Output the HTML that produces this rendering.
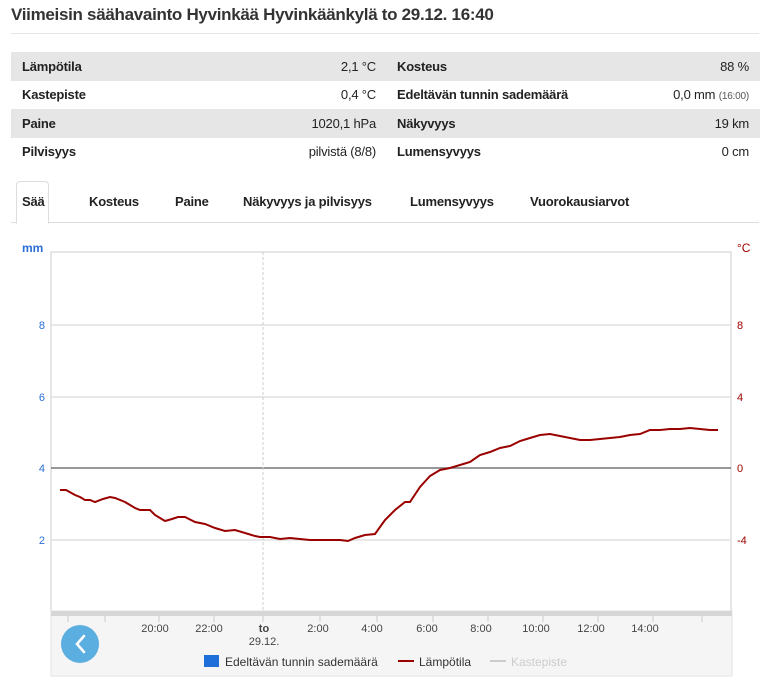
<!DOCTYPE html>
<html><head><meta charset="utf-8"><style>
body{margin:0;width:767px;height:685px;background:#fff;font-family:"Liberation Sans",sans-serif;color:#222;position:relative;overflow:hidden}
.a{position:absolute}
h1{position:absolute;left:11px;top:5px;margin:0;font-size:17px;font-weight:bold;color:#333;letter-spacing:-0.3px}
.hr{position:absolute;left:11px;top:33px;width:748px;height:1px;background:#e5e5e5}
table{position:absolute;left:11px;top:52px;width:749px;border-collapse:collapse;font-size:13px;table-layout:fixed}
td{height:28.5px;padding:0 11px 0 11px;letter-spacing:-0.2px;white-space:nowrap}
td.l2{padding-left:10px}
tr.g td{background:#e6e6e6}
td.l{font-weight:bold}
td.v{text-align:right}
small{font-size:10px;color:#555}
.tabs{position:absolute;left:11px;top:222px;width:748px;height:1px;background:#ddd}
.tab{position:absolute;top:194px;font-size:13px;font-weight:bold;color:#222;letter-spacing:-0.2px}
.act{position:absolute;left:16px;top:181px;width:31px;height:41px;border:1px solid #ddd;border-bottom:1px solid #fff;border-radius:4px 4px 0 0;background:#fff}
</style></head><body>
<h1>Viimeisin säähavainto Hyvinkää Hyvinkäänkylä to 29.12. 16:40</h1>
<div class="hr"></div>
<table>
<colgroup><col style="width:200px"><col style="width:176px"><col style="width:200px"><col style="width:173px"></colgroup>
<tr class="g"><td class="l">Lämpötila</td><td class="v">2,1 °C</td><td class="l l2">Kosteus</td><td class="v">88 %</td></tr>
<tr><td class="l">Kastepiste</td><td class="v">0,4 °C</td><td class="l l2">Edeltävän tunnin sademäärä</td><td class="v">0,0 mm <small>(16:00)</small></td></tr>
<tr class="g"><td class="l">Paine</td><td class="v">1020,1 hPa</td><td class="l l2">Näkyvyys</td><td class="v">19 km</td></tr>
<tr><td class="l">Pilvisyys</td><td class="v">pilvistä (8/8)</td><td class="l l2">Lumensyvyys</td><td class="v">0 cm</td></tr>
</table>
<div class="tabs"></div>
<div class="act"></div>
<div class="tab" style="left:22px">Sää</div>
<div class="tab" style="left:89px">Kosteus</div>
<div class="tab" style="left:175px">Paine</div>
<div class="tab" style="left:243px">Näkyvyys ja pilvisyys</div>
<div class="tab" style="left:410px">Lumensyvyys</div>
<div class="tab" style="left:530px">Vuorokausiarvot</div>
<svg class="a" style="left:0;top:0" width="767" height="685" font-family="Liberation Sans, sans-serif" font-size="11">
<text x="22" y="252" fill="#2a6fd6" font-weight="bold" font-size="12">mm</text>
<text x="737" y="252" fill="#a00000" font-size="12">°C</text>
<rect x="51" y="252" width="680" height="359" fill="none" stroke="#ccc"/>
<g stroke="#e0e0e0" stroke-width="1.5"><line x1="51" x2="731" y1="325" y2="325"/><line x1="51" x2="731" y1="397" y2="397"/><line x1="51" x2="731" y1="540" y2="540"/></g>
<line x1="51" x2="731" y1="468" y2="468" stroke="#777" stroke-width="1.5"/>
<line x1="263" x2="263" y1="252" y2="611" stroke="#ccc" stroke-dasharray="3,2"/>
<g fill="#2a6fd6" text-anchor="end"><text x="45" y="329">8</text><text x="45" y="401">6</text><text x="45" y="472">4</text><text x="45" y="544">2</text></g>
<g fill="#a00000"><text x="737" y="329">8</text><text x="737" y="401">4</text><text x="737" y="472">0</text><text x="737" y="544">-4</text></g>
<polyline fill="none" stroke="#9a0000" stroke-width="2" points="60,490 66,490 75,495 80,497 85,500 90,500 95,502 103,499 110,497 115,498 125,502 135,508 140,510 150,510 155,515 160,518 165,521 172,519 178,517 185,517 195,522 205,524 215,528 225,531 235,530 245,533 255,536 260,537 270,537 280,539 290,538 300,539 310,540 320,540 340,540 348,541 355,538 365,535 375,534 385,520 395,510 405,502 410,502 420,487 430,476 440,470 450,468 460,465 470,462 480,455 490,452 500,448 510,446 520,441 530,438 540,435 550,434 560,436 570,438 580,440 590,440 600,439 610,438 620,437 630,435 640,434 650,430 660,430 670,429 680,429 690,428 700,429 710,430 718,430"/>
<rect x="51" y="611" width="681" height="65" fill="#f5f5f5" stroke="#e3e3e3"/>
<rect x="51" y="611" width="681" height="5" fill="#d6d6d6"/>
<g stroke="#ccc"><line x1="68" x2="68" y1="616" y2="622"/><line x1="105" x2="105" y1="616" y2="622"/><line x1="159" x2="159" y1="616" y2="622"/><line x1="214" x2="214" y1="616" y2="622"/><line x1="263" x2="263" y1="616" y2="622"/><line x1="320" x2="320" y1="616" y2="622"/><line x1="377" x2="377" y1="616" y2="622"/><line x1="433" x2="433" y1="616" y2="622"/><line x1="488" x2="488" y1="616" y2="622"/><line x1="543" x2="543" y1="616" y2="622"/><line x1="598" x2="598" y1="616" y2="622"/><line x1="653" x2="653" y1="616" y2="622"/><line x1="702" x2="702" y1="616" y2="622"/></g>
<g fill="#444" text-anchor="middle"><text x="155" y="632">20:00</text><text x="209" y="632">22:00</text><text x="264" y="632" font-weight="bold">to</text><text x="264" y="645">29.12.</text><text x="318" y="632">2:00</text><text x="372" y="632">4:00</text><text x="427" y="632">6:00</text><text x="481" y="632">8:00</text><text x="536" y="632">10:00</text><text x="591" y="632">12:00</text><text x="645" y="632">14:00</text></g>
<circle cx="80" cy="644" r="19" fill="#5aaee0"/>
<path d="M84 636 L77 644 L84 652" fill="none" stroke="#fff" stroke-width="2.5" stroke-linecap="round"/>
<rect x="204" y="655" width="15" height="12" fill="#1e6fd9"/>
<text x="225" y="666" fill="#333" font-size="12">Edeltävän tunnin sademäärä</text>
<line x1="398" x2="414" y1="661" y2="661" stroke="#9a0000" stroke-width="2"/>
<text x="419" y="666" fill="#333" font-size="12">Lämpötila</text>
<line x1="490" x2="506" y1="661" y2="661" stroke="#ccc" stroke-width="2"/>
<text x="511" y="666" fill="#ccc" font-size="12">Kastepiste</text>
</svg>
</body></html>
